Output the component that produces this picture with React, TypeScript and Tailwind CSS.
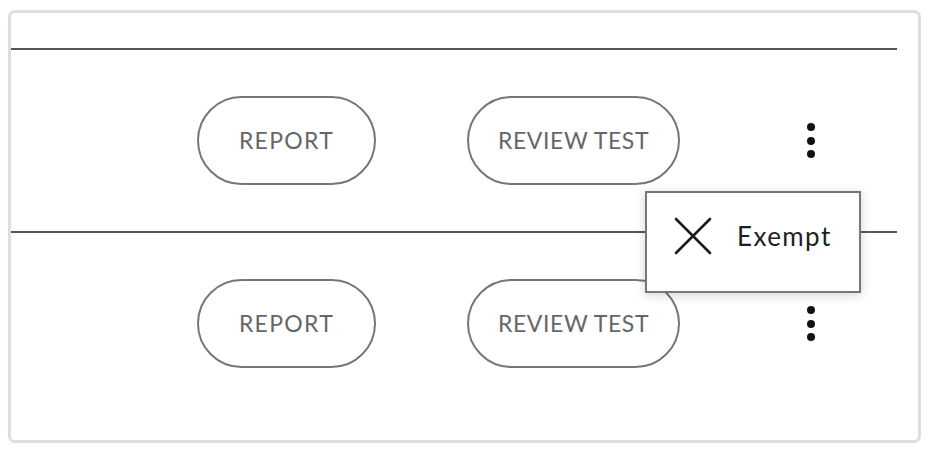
export default function App() {
  const rows = [0, 1];
  return (
    <div className="w-[934px] h-[462px] bg-white pt-[10px] pl-[8px] font-['Lato',sans-serif]">
      <div className="relative w-[913px] h-[433px] border-[3px] border-[#dcdee3] rounded-[7px] pt-[35px] pr-[21px]">
        {rows.map((r) => (
          <div
            key={r}
            className="h-[183px] border-t-2 border-[#555555] flex items-center pl-[186px]"
          >
            <button className="w-[179px] h-[89px] rounded-full border-2 border-[#777777] text-[23px] tracking-[1.3px] text-[#666666] flex items-center justify-center">
              REPORT
            </button>
            <button className="ml-[91px] w-[213px] h-[89px] rounded-full border-2 border-[#777777] text-[23px] tracking-[0.6px] text-[#666666] flex items-center justify-center">
              REVIEW TEST
            </button>
            <div className="ml-[127px] flex flex-col gap-[5.5px]">
              <span className="w-[8px] h-[8px] rounded-full bg-[#111111]" />
              <span className="w-[8px] h-[8px] rounded-full bg-[#111111]" />
              <span className="w-[8px] h-[8px] rounded-full bg-[#111111]" />
            </div>
          </div>
        ))}

        {/* menu popover */}
        <div className="absolute left-[634px] top-[178px] w-[216px] h-[102px] bg-white border-2 border-[#777777] shadow-[0_2px_10px_rgba(0,0,0,0.18)] flex items-center pl-[27px] pb-[12px]">
          <svg width="38" height="38" viewBox="0 0 38 38" className="shrink-0">
            <path d="M2 2 L36 36 M36 2 L2 36" stroke="#1a1a1a" strokeWidth="2.6" strokeLinecap="round" />
          </svg>
          <span className="ml-[25px] text-[26px] tracking-[1.4px] text-[#1f1f1f]">Exempt</span>
        </div>
      </div>
    </div>
  );
}
